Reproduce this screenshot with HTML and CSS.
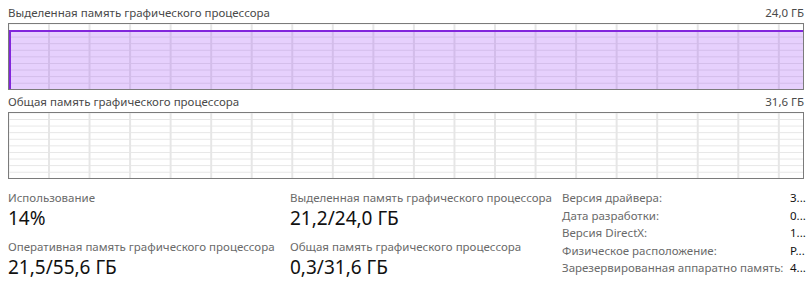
FILE: index.html
```html
<!DOCTYPE html>
<html lang="ru">
<head>
<meta charset="utf-8">
<link rel="stylesheet" href="styles.css">
</head>
<body>
<div class="page">
  <div class="chart-head">
    <span>Выделенная память графического процессора</span>
    <span>24,0 ГБ</span>
  </div>
  <div class="chart">
    <div class="spacer"></div>
    <div class="fill"></div>
  </div>
  <div class="chart-head second">
    <span>Общая память графического процессора</span>
    <span>31,6 ГБ</span>
  </div>
  <div class="chart"></div>

  <div class="stats">
    <div class="col">
      <div class="stat">
        <div class="label">Использование</div>
        <div class="value">14%</div>
      </div>
      <div class="stat">
        <div class="label">Оперативная память графического процессора</div>
        <div class="value">21,5/55,6 ГБ</div>
      </div>
    </div>
    <div class="col">
      <div class="stat">
        <div class="label">Выделенная память графического процессора</div>
        <div class="value">21,2/24,0 ГБ</div>
      </div>
      <div class="stat">
        <div class="label">Общая память графического процессора</div>
        <div class="value">0,3/31,6 ГБ</div>
      </div>
    </div>
    <div class="info">
      <span class="k">Версия драйвера:</span><span class="v">3...</span>
      <span class="k">Дата разработки:</span><span class="v">0...</span>
      <span class="k">Версия DirectX:</span><span class="v">1...</span>
      <span class="k">Физическое расположение:</span><span class="v">P...</span>
      <span class="k">Зарезервированная аппаратно память:</span><span class="v">4...</span>
    </div>
  </div>
</div>
</body>
</html>
```
FILE: styles.css
```css
html, body {
  margin: 0;
  padding: 0;
  background: #ffffff;
}
body {
  font-family: "Noto Sans", "Open Sans", sans-serif;
  color: #1a1a1a;
}
.page {
  padding: 5px 5px 0 8px;
  width: 796px;
}
.chart-head {
  display: flex;
  justify-content: space-between;
  font-size: 11.5px;
  line-height: 16px;
  color: #4a4a4a;
  height: 18px;
}
.chart-head.second {
  margin-top: 4px;
}
.chart {
  height: 65px;
  border: 1px solid #7b7b7b;
  display: flex;
  flex-direction: column;
  background-color: #ffffff;
  background-image:
    linear-gradient(to right, #e6e6e6 0 2px, transparent 2px),
    linear-gradient(to bottom, #e6e6e6 0 1px, transparent 1px);
  background-size: 40.55px 100%, 100% 6.6px;
  background-position: 39px 0, 0 6px;
}
.spacer {
  height: 6px;
  flex: none;
}
.fill {
  flex: 1;
  border-top: 2px solid #8126dc;
  border-left: 2px solid #8126dc;
  background: rgba(150, 60, 245, 0.24);
}
.stats {
  display: grid;
  grid-template-columns: 282px 272px 1fr;
  margin-top: 11px;
}
.col {
  display: flex;
  flex-direction: column;
}
.stat {
  display: flex;
  flex-direction: column;
}
.label {
  font-size: 11.5px;
  line-height: 15px;
  color: #6a6a6a;
}
.value {
  font-size: 19px;
  line-height: 26px;
  color: #111;
  margin-bottom: 8px;
}
.info {
  display: grid;
  grid-template-columns: 228px 1fr;
  align-content: start;
  row-gap: 2.5px;
  font-size: 11.5px;
  line-height: 15px;
  padding-top: 0;
}
.info .k {
  color: #6a6a6a;
}
.info .v {
  color: #111;
}
```
